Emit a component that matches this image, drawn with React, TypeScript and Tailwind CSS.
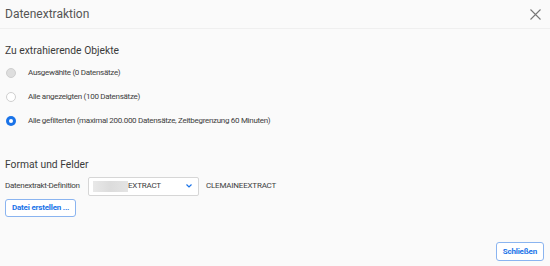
import React from "react";

function Radio({ state }: { state: "disabled" | "off" | "on" }) {
  if (state === "on") {
    return (
      <span className="flex h-[10px] w-[10px] items-center justify-center rounded-full bg-[#1a73e8]">
        <span className="h-[4px] w-[4px] rounded-full bg-white" />
      </span>
    );
  }
  if (state === "disabled") {
    return <span className="h-[10px] w-[10px] rounded-full border border-[#cfcfcf] bg-[#dedede]" />;
  }
  return <span className="h-[10px] w-[10px] rounded-full border border-[#cfcfcf] bg-white" />;
}

export default function App() {
  const options: { label: string; state: "disabled" | "off" | "on" }[] = [
    { label: "Ausgewählte (0 Datensätze)", state: "disabled" },
    { label: "Alle angezeigten (100 Datensätze)", state: "off" },
    { label: "Alle gefilterten (maximal 200.000 Datensätze, Zeitbegrenzung 60 Minuten)", state: "on" },
  ];

  return (
    <div
      className="flex h-[266px] w-[550px] flex-col bg-[#fafafa] text-[#333]"
      style={{ fontFamily: "Roboto, 'Liberation Sans', sans-serif" }}
    >
      {/* header */}
      <div className="flex h-[29px] items-center justify-between border-b border-[#efefef] pl-[5px] pr-[9px]">
        <span className="text-[12px] text-[#555]">Datenextraktion</span>
        <svg width="11" height="11" viewBox="0 0 11 11" className="text-[#777]">
          <path d="M0.5 0.5L10.5 10.5M10.5 0.5L0.5 10.5" stroke="currentColor" strokeWidth="1.1" fill="none" />
        </svg>
      </div>

      <div className="flex flex-1 flex-col px-[5px]">
        <div className="mt-[14px] text-[10.3px] text-[#3a3a3a]">Zu extrahierende Objekte</div>
        <div className="mt-[8px] flex flex-col gap-[11px] pl-[1px]">
          {options.map((o) => (
            <div key={o.label} className="flex h-[13px] items-center gap-[12px]">
              <Radio state={o.state} />
              <span className="text-[8px] tracking-[-0.3px] text-[#404040]">{o.label}</span>
            </div>
          ))}
        </div>

        <div className="mt-[30px] text-[10.3px] text-[#3a3a3a]">Format und Felder</div>
        <div className="mt-[4px] flex items-center">
          <span className="w-[83px] whitespace-nowrap text-[8px] tracking-[-0.3px] text-[#404040]">Datenextrakt-Definition</span>
          <div className="flex h-[19px] w-[111px] items-center justify-between rounded-[2px] border border-[#d6d6d6] bg-white pl-[4px] pr-[5px]">
            <div className="flex items-center">
              <span className="h-[11px] w-[35px] bg-gradient-to-r from-[#e8e8e8] via-[#dcdcdc] to-[#e4e4e4]" />
              <span className="text-[8px] tracking-[-0.2px] text-[#404040]">EXTRACT</span>
            </div>
            <svg width="8" height="6" viewBox="0 0 8 6">
              <path d="M1.5 1.5L4 4L6.5 1.5" stroke="#1a73e8" strokeWidth="1.2" fill="none" />
            </svg>
          </div>
          <span className="ml-[7px] text-[8px] tracking-[-0.2px] text-[#404040]">CLEMAINEEXTRACT</span>
        </div>
        <div className="mt-[3px] flex">
          <button className="h-[18px] rounded-[3px] border border-[#8ab4f0] bg-white px-[6px] text-[8px] font-bold tracking-[-0.2px] text-[#1a73e8]">
            Datei erstellen ...
          </button>
        </div>

        <div className="mt-auto mb-[5px] flex justify-end pr-[1px]">
          <button className="h-[19px] rounded-[3px] border border-[#8ab4f0] bg-white px-[6px] text-[8px] font-bold tracking-[-0.2px] text-[#1a73e8]">
            Schließen
          </button>
        </div>
      </div>
    </div>
  );
}
